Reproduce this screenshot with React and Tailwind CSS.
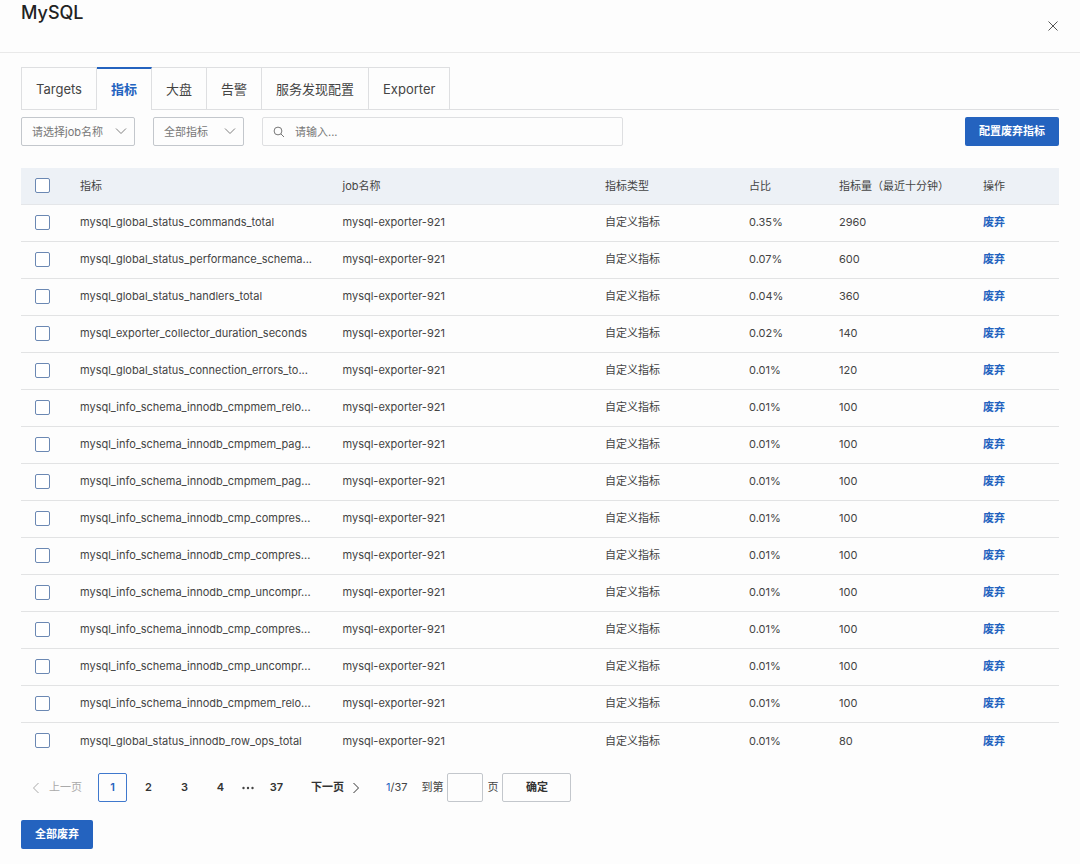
import React, { useState } from "react";

const TABS = ["Targets", "指标", "大盘", "告警", "服务发现配置", "Exporter"];

const METRICS = [
  { name: "mysql_global_status_commands_total", ratio: "0.35%", count: 2960 },
  { name: "mysql_global_status_performance_schema...", ratio: "0.07%", count: 600 },
  { name: "mysql_global_status_handlers_total", ratio: "0.04%", count: 360 },
  { name: "mysql_exporter_collector_duration_seconds", ratio: "0.02%", count: 140 },
  { name: "mysql_global_status_connection_errors_to...", ratio: "0.01%", count: 120 },
  { name: "mysql_info_schema_innodb_cmpmem_relo...", ratio: "0.01%", count: 100 },
  { name: "mysql_info_schema_innodb_cmpmem_pag...", ratio: "0.01%", count: 100 },
  { name: "mysql_info_schema_innodb_cmpmem_pag...", ratio: "0.01%", count: 100 },
  { name: "mysql_info_schema_innodb_cmp_compres...", ratio: "0.01%", count: 100 },
  { name: "mysql_info_schema_innodb_cmp_compres...", ratio: "0.01%", count: 100 },
  { name: "mysql_info_schema_innodb_cmp_uncompr...", ratio: "0.01%", count: 100 },
  { name: "mysql_info_schema_innodb_cmp_compres...", ratio: "0.01%", count: 100 },
  { name: "mysql_info_schema_innodb_cmp_uncompr...", ratio: "0.01%", count: 100 },
  { name: "mysql_info_schema_innodb_cmpmem_relo...", ratio: "0.01%", count: 100 },
  { name: "mysql_global_status_innodb_row_ops_total", ratio: "0.01%", count: 80 },
];

const Chevron = ({ className, d }) => (
  <svg viewBox="0 0 12 12" fill="none" stroke="currentColor" className={className} aria-hidden="true">
    <path d={d} />
  </svg>
);

const FilterSelect = ({ label, className }) => (
  <div className={`relative ${className}`}>
    <select
      aria-label={label}
      className="block h-[29px] w-full appearance-none rounded-[2px] border border-[#c3c7cc] bg-transparent pl-[10px] pr-6 pt-px text-[11px] text-[#777]"
    >
      <option>{label}</option>
    </select>
    <Chevron
      d="M1 3.5 6 8.5 11 3.5"
      className="pointer-events-none absolute right-2 top-2 h-3 w-3 text-[#808080]"
    />
  </div>
);

const Checkbox = ({ label, checked, onChange }) => (
  <input
    type="checkbox"
    aria-label={label}
    checked={checked}
    onChange={onChange}
    className="block h-[15px] w-[15px] appearance-none rounded-[2px] border border-[#6b88b3] bg-white checked:bg-[#2463bf]"
  />
);

const PrimaryButton = ({ children }) => (
  <button className="h-[29px] rounded-[2px] bg-[#2463bf] px-[14px] text-[11px] font-semibold text-white">
    {children}
  </button>
);

const TabBar = ({ active, onSelect }) => (
  <div className="flex h-[43px]" role="tablist">
    {TABS.map((tab, index) => (
      <button
        key={tab}
        role="tab"
        aria-selected={tab === active}
        onClick={() => onSelect(tab)}
        className={`border-r border-[#dedfe1] px-[14px] text-[13px] ${index === 0 ? "border-l" : ""} ${
          tab === active
            ? "border-t-2 border-t-[#2463bf] font-semibold text-[#2463bf]"
            : "border-y pt-[2px] text-[#444]"
        }`}
      >
        {tab}
      </button>
    ))}
    <div className="flex-1 border-b border-[#dedfe1]" />
  </div>
);

const MetricTable = () => {
  const [selected, setSelected] = useState([]);
  const allSelected = selected.length === METRICS.length;

  const toggle = (index) =>
    setSelected((prev) => (prev.includes(index) ? prev.filter((i) => i !== index) : [...prev, index]));

  return (
    <table className="w-full table-fixed border-collapse whitespace-nowrap text-left text-[11px] text-[#444]">
      <colgroup>
        <col className="w-[43px]" />
        <col />
        <col />
        <col className="w-36" />
        <col className="w-[90px]" />
        <col className="w-36" />
        <col className="w-[92px]" />
      </colgroup>
      <thead>
        <tr className="h-9 border-b border-[#e4e6e9] bg-[#edf1f6]">
          <th className="pl-[14px]">
            <Checkbox
              label="全选"
              checked={allSelected}
              onChange={() => setSelected(allSelected ? [] : METRICS.map((_, i) => i))}
            />
          </th>
          <th className="px-4 font-normal">指标</th>
          <th className="px-4 font-normal">job名称</th>
          <th className="px-4 font-normal">指标类型</th>
          <th className="px-4 font-normal">占比</th>
          <th className="px-4 font-normal">指标量（最近十分钟）</th>
          <th className="px-4 font-normal">操作</th>
        </tr>
      </thead>
      <tbody>
        {METRICS.map((metric, index) => (
          <tr key={index} className="h-[37px] border-b border-[#e2e3e4] last:border-b-0">
            <td className="pl-[14px]">
              <Checkbox
                label={metric.name}
                checked={selected.includes(index)}
                onChange={() => toggle(index)}
              />
            </td>
            <td className="pl-4">{metric.name}</td>
            <td className="px-4">mysql-exporter-921</td>
            <td className="px-4">自定义指标</td>
            <td className="px-4">{metric.ratio}</td>
            <td className="px-4">{metric.count}</td>
            <td className="px-4">
              <a href="#" className="font-semibold text-[#2463bf]">废弃</a>
            </td>
          </tr>
        ))}
      </tbody>
    </table>
  );
};

const PageButton = ({ children, active }) => (
  <button
    className={`h-[29px] w-[29px] rounded-[2px] font-semibold ${
      active ? "border border-[#3f78cd] text-[#2463bf]" : "text-[#333]"
    }`}
  >
    {children}
  </button>
);

const Pagination = () => (
  <nav className="flex items-center text-[11px] text-[#444]" aria-label="分页">
    <button disabled className="flex items-center gap-[7px] pl-[9px] text-[#aaa]">
      <Chevron d="M8.5 1 3.5 6 8.5 11" className="h-3 w-3" />
      上一页
    </button>
    <div className="ml-4 flex items-center gap-[7px]">
      <PageButton active>1</PageButton>
      <PageButton>2</PageButton>
      <PageButton>3</PageButton>
      <PageButton>4</PageButton>
    </div>
    <svg viewBox="0 0 12 4" className="ml-[7px] mr-2 h-1 w-3" fill="#444" aria-hidden="true">
      <circle cx="1.5" cy="2" r="1.2" />
      <circle cx="6" cy="2" r="1.2" />
      <circle cx="10.5" cy="2" r="1.2" />
    </svg>
    <PageButton>37</PageButton>
    <button className="ml-5 flex items-center gap-[6px] font-semibold text-[#333]">
      下一页
      <Chevron d="M3.5 1 8.5 6 3.5 11" className="h-3 w-3" />
    </button>
    <span className="ml-6">
      <span className="text-[#2463bf]">1</span>/37
    </span>
    <label className="ml-[14px] flex items-center gap-1">
      到第
      <input
        type="text"
        className="h-[29px] w-9 rounded-[2px] border border-[#c3c7cc] bg-transparent px-2 outline-none"
      />
      页
    </label>
    <button className="ml-1 h-[29px] w-[69px] rounded-[2px] border border-[#c3c7cc] font-semibold text-[#333]">
      确定
    </button>
  </nav>
);

export default function App() {
  const [tab, setTab] = useState("指标");

  return (
    <div className="min-h-screen bg-[#fdfdfd] font-['Inter','Noto_Sans_CJK_SC',sans-serif] text-[#333]">
      <header className="flex h-[53px] justify-between border-b border-[#e9e9e9] px-[21px]">
        <h1 className="text-[18px] font-medium leading-[26px] text-[#222]">MySQL</h1>
        <button aria-label="关闭" className="mt-5 h-3 w-3 text-[#555]">
          <svg viewBox="0 0 12 12" fill="none" stroke="currentColor" className="h-3 w-3">
            <path d="M1.5 1.5 10.5 10.5M10.5 1.5 1.5 10.5" />
          </svg>
        </button>
      </header>

      <main className="px-[21px] pb-[15px] pt-[14px]">
        <TabBar active={tab} onSelect={setTab} />

        <div className="mt-[7px] flex items-center">
          <FilterSelect label="请选择job名称" className="w-[114px]" />
          <FilterSelect label="全部指标" className="ml-[18px] w-[91px]" />
          <div className="ml-[18px] mr-auto flex h-[29px] w-[361px] items-center rounded-[2px] border border-[#dedfe1] pl-[10px]">
            <svg viewBox="0 0 12 12" fill="none" stroke="#777" className="h-3 w-3" aria-hidden="true">
              <circle cx="5" cy="5" r="3.9" />
              <path d="M7.8 7.8 11 11" />
            </svg>
            <input
              type="text"
              aria-label="搜索指标"
              placeholder="请输入..."
              className="ml-[10px] flex-1 bg-transparent pt-px text-[11px] outline-none placeholder:text-[#777]"
            />
          </div>
          <PrimaryButton>配置废弃指标</PrimaryButton>
        </div>

        <div className="mt-[22px]">
          <MetricTable />
        </div>

        <div className="mt-[14px]">
          <Pagination />
        </div>

        <div className="mt-[18px] flex">
          <PrimaryButton>全部废弃</PrimaryButton>
        </div>
      </main>
    </div>
  );
}
